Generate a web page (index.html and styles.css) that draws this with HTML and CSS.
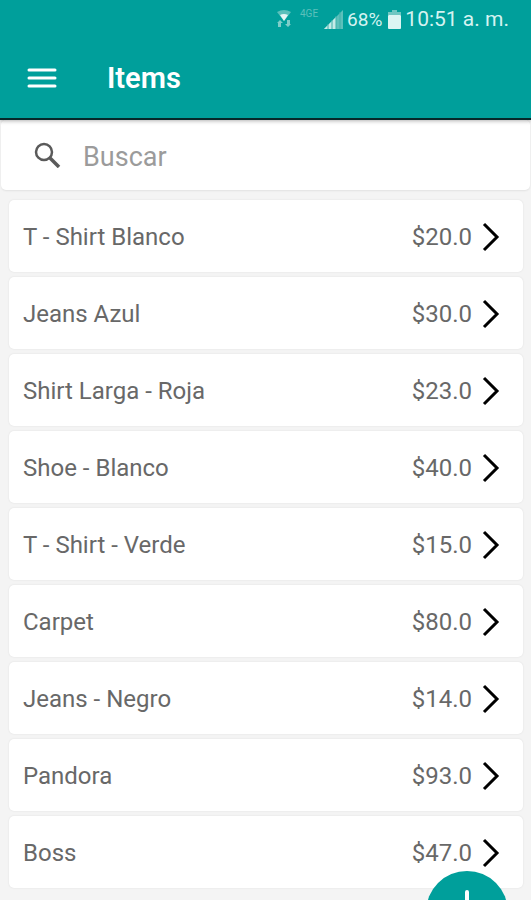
FILE: index.html
```html
<!DOCTYPE html>
<html lang="es">
<head>
    <meta charset="UTF-8">
    <meta name="viewport" content="width=device-width, initial-scale=1.0">
    <title>Items</title>
    <link rel="stylesheet" href="styles.css">
</head>
<body>
    <header class="header">
        <div class="status-bar">
            <svg class="wifi" width="16" height="20" viewBox="0 0 16 20">
                <path d="M1 3 Q8 -1 15 3 L8 12 Z" fill="#5cc0bb"/>
                <path d="M4 6 Q8 4 12 6 L8 12 Z" fill="#e4f6f5"/>
                <path d="M4 11 L7 14 H5 V18 H2 V14 H1 Z M12 18 L9 15 H11 V11 H14 V15 H15 Z" fill="#7fcdc9"/>
            </svg>
            <span class="network">4GE</span>
            <svg class="signal" width="19" height="19" viewBox="0 0 19 19">
                <path d="M0 19 L19 0 V19 Z" fill="#5cc0bb"/>
                <path d="M0 19 L12 7 V19 Z" fill="#c5ebe8"/>
                <path d="M4 14 V19 M8 10 V19 M12 6 V19 M16 2 V19" stroke="#3fb0aa"/>
            </svg>
            <span>68%</span>
            <svg class="battery" width="13" height="19" viewBox="0 0 13 19">
                <path d="M4 0 H9 V2 H13 V5 H0 V2 H4 Z" fill="#6fc7c2"/>
                <rect y="5" width="13" height="14" rx="1" fill="#dcf5f3"/>
            </svg>
            <span class="clock">10:51 a. m.</span>
        </div>
        <div class="toolbar">
            <button class="menu-button" aria-label="Menú">
                <svg width="30" height="20" viewBox="0 0 30 20">
                    <path d="M2 2 H28 M2 10 H28 M2 18 H28" stroke="#fff" stroke-width="3" stroke-linecap="round"/>
                </svg>
            </button>
            <h1>Items</h1>
        </div>
    </header>

    <main>
        <div class="search">
            <label for="search-input" aria-label="Buscar">
                <svg width="28" height="26" viewBox="0 0 28 26" fill="none" stroke="#5a5a5a">
                    <circle cx="11" cy="10" r="8" stroke-width="2.5"/>
                    <path d="M17 16 L26 25" stroke-width="3.5"/>
                </svg>
            </label>
            <input type="text" id="search-input" placeholder="Buscar">
        </div>

        <ul class="items">
            <li><a class="item" href="#"><span>T - Shirt Blanco</span><span class="price">$20.0</span><svg class="arrow" viewBox="0 0 18 30"><path d="M2 2 L15 15 L2 28"/></svg></a></li>
            <li><a class="item" href="#"><span>Jeans Azul</span><span class="price">$30.0</span><svg class="arrow" viewBox="0 0 18 30"><path d="M2 2 L15 15 L2 28"/></svg></a></li>
            <li><a class="item" href="#"><span>Shirt Larga - Roja</span><span class="price">$23.0</span><svg class="arrow" viewBox="0 0 18 30"><path d="M2 2 L15 15 L2 28"/></svg></a></li>
            <li><a class="item" href="#"><span>Shoe - Blanco</span><span class="price">$40.0</span><svg class="arrow" viewBox="0 0 18 30"><path d="M2 2 L15 15 L2 28"/></svg></a></li>
            <li><a class="item" href="#"><span>T - Shirt - Verde</span><span class="price">$15.0</span><svg class="arrow" viewBox="0 0 18 30"><path d="M2 2 L15 15 L2 28"/></svg></a></li>
            <li><a class="item" href="#"><span>Carpet</span><span class="price">$80.0</span><svg class="arrow" viewBox="0 0 18 30"><path d="M2 2 L15 15 L2 28"/></svg></a></li>
            <li><a class="item" href="#"><span>Jeans - Negro</span><span class="price">$14.0</span><svg class="arrow" viewBox="0 0 18 30"><path d="M2 2 L15 15 L2 28"/></svg></a></li>
            <li><a class="item" href="#"><span>Pandora</span><span class="price">$93.0</span><svg class="arrow" viewBox="0 0 18 30"><path d="M2 2 L15 15 L2 28"/></svg></a></li>
            <li><a class="item" href="#"><span>Boss</span><span class="price">$47.0</span><svg class="arrow" viewBox="0 0 18 30"><path d="M2 2 L15 15 L2 28"/></svg></a></li>
        </ul>
    </main>

    <button class="add-button" aria-label="Agregar">
        <svg width="44" height="44" viewBox="0 0 44 44">
            <path d="M22 2 V42 M2 22 H42" stroke="#fff" stroke-width="4" stroke-linecap="round"/>
        </svg>
    </button>
</body>
</html>
```

FILE: styles.css
```css
* {
    box-sizing: border-box;
}
body {
    margin: 0;
    background-color: #f4f4f4;
    color: #686868;
    font-family: Roboto, "Liberation Sans", sans-serif;
}
button {
    padding: 0;
    border: none;
    background: none;
    cursor: pointer;
}
svg {
    display: block;
    flex-shrink: 0;
}
.header {
    background-color: #009f9b;
    border-bottom: 2px solid #06282a;
    box-shadow: 0 1px 4px rgba(0, 0, 0, 0.3);
    position: relative;
}
.status-bar {
    display: flex;
    align-items: center;
    justify-content: flex-end;
    height: 38px;
    padding-right: 22px;
    color: #d5f3f1;
    font-size: 19px;
}
.network {
    align-self: flex-start;
    margin: 8px 6px 0 8px;
    color: #5cc0bb;
    font-size: 10px;
}
.signal {
    margin-right: 4px;
}
.battery {
    margin: 0 4px 0 6px;
}
.clock {
    font-size: 21px;
}
.toolbar {
    display: flex;
    align-items: center;
    height: 80px;
    padding-left: 27px;
    gap: 50px;
}
.toolbar h1 {
    margin: 0;
    color: #fff;
    font-size: 29px;
    font-weight: 600;
}
.search {
    display: flex;
    align-items: center;
    height: 70px;
    margin: 0 1px 10px;
    padding-left: 32px;
    gap: 22px;
    background-color: #fff;
    border-radius: 5px;
    box-shadow: 0 1px 2px rgba(0, 0, 0, 0.08);
}
.search input {
    flex: 1;
    min-width: 0;
    padding: 4px 0 0;
    border: none;
    outline: none;
    background: none;
    color: #686868;
    font-family: inherit;
    font-size: 27px;
}
.search input::placeholder {
    color: #9b9b9b;
}
.items {
    display: flex;
    flex-direction: column;
    gap: 5px;
    margin: 0;
    padding: 0 8px 12px 9px;
    list-style: none;
}
.item {
    display: flex;
    align-items: center;
    height: 72px;
    padding: 2px 23px 0 14px;
    background-color: #fff;
    border-radius: 5px;
    box-shadow: 0 0 2px rgba(0, 0, 0, 0.1);
    color: #686868;
    font-size: 24px;
    text-decoration: none;
}
.price {
    margin-left: auto;
}
.arrow {
    width: 18px;
    height: 30px;
    margin-left: 10px;
    fill: none;
    stroke: #000;
    stroke-width: 3;
}
.add-button {
    position: fixed;
    right: 23px;
    bottom: -53px;
    display: flex;
    justify-content: center;
    align-items: center;
    width: 82px;
    height: 82px;
    border-radius: 50%;
    background-color: #009f9b;
}
```
